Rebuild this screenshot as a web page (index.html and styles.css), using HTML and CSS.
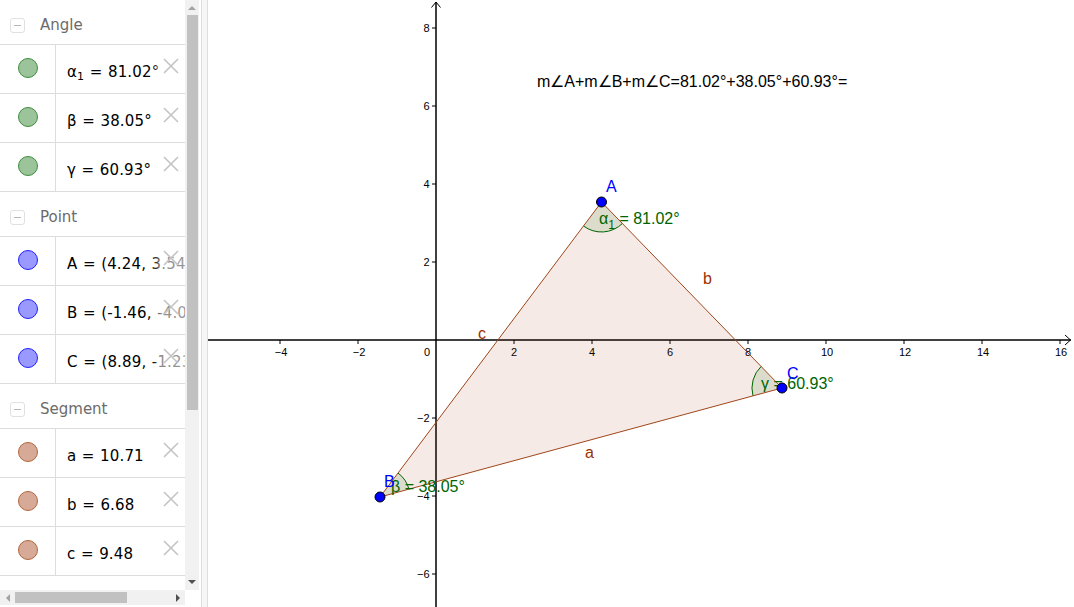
FILE: index.html
```html
<!DOCTYPE html>
<html>
<head>
<meta charset="utf-8">
<link rel="stylesheet" href="styles.css">
</head>
<body>
<div class="algebra">
  <div class="list">
    <div class="group-header"><span class="toggle"></span><span class="group-title">Angle</span></div>
    <div class="row"><div class="marker"><span class="dot dot-angle"></span></div><div class="value">α<sub>1</sub> = 81.02°</div><svg class="delete" viewBox="0 0 16 16"><path d="M1 1L15 15M15 1L1 15"/></svg></div>
    <div class="row"><div class="marker"><span class="dot dot-angle"></span></div><div class="value">β = 38.05°</div><svg class="delete" viewBox="0 0 16 16"><path d="M1 1L15 15M15 1L1 15"/></svg></div>
    <div class="row"><div class="marker"><span class="dot dot-angle"></span></div><div class="value">γ = 60.93°</div><svg class="delete" viewBox="0 0 16 16"><path d="M1 1L15 15M15 1L1 15"/></svg></div>

    <div class="group-header"><span class="toggle"></span><span class="group-title">Point</span></div>
    <div class="row"><div class="marker"><span class="dot dot-point"></span></div><div class="value">A = (4.24, 3.54)</div><svg class="delete" viewBox="0 0 16 16"><path d="M1 1L15 15M15 1L1 15"/></svg></div>
    <div class="row"><div class="marker"><span class="dot dot-point"></span></div><div class="value">B = (-1.46, -4.03)</div><svg class="delete" viewBox="0 0 16 16"><path d="M1 1L15 15M15 1L1 15"/></svg></div>
    <div class="row"><div class="marker"><span class="dot dot-point"></span></div><div class="value">C = (8.89, -1.23)</div><svg class="delete" viewBox="0 0 16 16"><path d="M1 1L15 15M15 1L1 15"/></svg></div>

    <div class="group-header"><span class="toggle"></span><span class="group-title">Segment</span></div>
    <div class="row"><div class="marker"><span class="dot dot-seg"></span></div><div class="value">a = 10.71</div><svg class="delete" viewBox="0 0 16 16"><path d="M1 1L15 15M15 1L1 15"/></svg></div>
    <div class="row"><div class="marker"><span class="dot dot-seg"></span></div><div class="value">b = 6.68</div><svg class="delete" viewBox="0 0 16 16"><path d="M1 1L15 15M15 1L1 15"/></svg></div>
    <div class="row"><div class="marker"><span class="dot dot-seg"></span></div><div class="value">c = 9.48</div><svg class="delete" viewBox="0 0 16 16"><path d="M1 1L15 15M15 1L1 15"/></svg></div>
  </div>
  <div class="vscroll">
    <div class="vbtn"><span class="arrow-up"></span></div>
    <div class="vthumb"></div>
    <div class="vspace"></div>
    <div class="vbtn vbtn-down"><span class="arrow-down"></span></div>
  </div>
  <div class="hscroll">
    <div class="hbtn"><span class="arrow-left"></span></div>
    <div class="hthumb"></div>
    <div class="hspace"></div>
    <div class="hbtn"><span class="arrow-right"></span></div>
  </div>
</div>
<div class="divider"></div>
<div class="graphics">
  <svg class="canvas" width="866" height="607" viewBox="208 0 866 607">
    <g class="axis">
      <line x1="208" y1="340" x2="1071" y2="340"/>
      <polyline class="arrowhead" points="1065,335 1070.5,340 1065,345" fill="none"/>
      <line x1="436" y1="2" x2="436" y2="607"/>
      <polyline class="arrowhead" points="431.5,7.5 436,2 440.5,7.5" fill="none"/>
      <g class="ticks">
        <line x1="280" y1="340" x2="280" y2="344"/>
        <line x1="358" y1="340" x2="358" y2="344"/>
        <line x1="514" y1="340" x2="514" y2="344"/>
        <line x1="592" y1="340" x2="592" y2="344"/>
        <line x1="670" y1="340" x2="670" y2="344"/>
        <line x1="748" y1="340" x2="748" y2="344"/>
        <line x1="826" y1="340" x2="826" y2="344"/>
        <line x1="904" y1="340" x2="904" y2="344"/>
        <line x1="982" y1="340" x2="982" y2="344"/>
        <line x1="1060" y1="340" x2="1060" y2="344"/>
        <line x1="432" y1="28" x2="436" y2="28"/>
        <line x1="432" y1="106" x2="436" y2="106"/>
        <line x1="432" y1="184" x2="436" y2="184"/>
        <line x1="432" y1="262" x2="436" y2="262"/>
        <line x1="432" y1="418" x2="436" y2="418"/>
        <line x1="432" y1="496" x2="436" y2="496"/>
        <line x1="432" y1="574" x2="436" y2="574"/>
      </g>
    </g>
    <g class="axis-label xl">
      <text x="281" y="356">−4</text>
      <text x="359" y="356">−2</text>
      <text x="427" y="356">0</text>
      <text x="514" y="356">2</text>
      <text x="592" y="356">4</text>
      <text x="670" y="356">6</text>
      <text x="748" y="356">8</text>
      <text x="827" y="356">10</text>
      <text x="905" y="356">12</text>
      <text x="983" y="356">14</text>
      <text x="1061" y="356">16</text>
    </g>
    <g class="axis-label yl">
      <text x="429.5" y="32">8</text>
      <text x="429.5" y="110">6</text>
      <text x="429.5" y="188">4</text>
      <text x="429.5" y="266">2</text>
      <text x="429.5" y="422">−2</text>
      <text x="429.5" y="500">−4</text>
      <text x="429.5" y="578">−6</text>
    </g>

    <polygon class="poly" points="601.5,202 380,497 782,388"/>

    <path class="sector" d="M601.5 202 L622.4 223.5 A30 30 0 0 1 583.5 226 Z"/>
    <path class="arc" d="M622.4 223.5 A30 30 0 0 1 583.5 226"/>
    <path class="sector" d="M380 497 L398 473 A30 30 0 0 1 409 489.2 Z"/>
    <path class="arc" d="M398 473 A30 30 0 0 1 409 489.2"/>
    <path class="sector" d="M782 388 L753 395.9 A30 30 0 0 1 761.1 366.5 Z"/>
    <path class="arc" d="M753 395.9 A30 30 0 0 1 761.1 366.5"/>

    <polygon class="edges" points="601.5,202 380,497 782,388"/>

    <text class="lbl seg" x="703" y="284">b</text>
    <text class="lbl seg" x="478" y="339">c</text>
    <text class="lbl seg" x="585" y="458">a</text>

    <text class="lbl ang" x="599" y="224">α<tspan dy="5" class="sub">1</tspan><tspan dy="-5"> = 81.02°</tspan></text>
    <text class="lbl ang" x="761" y="389">γ = 60.93°</text>
    <text class="lbl ang" x="391" y="492">β = 38.05°</text>

    <text class="lbl pt" x="606" y="192">A</text>
    <text class="lbl pt" x="787" y="379">C</text>
    <text class="lbl pt" x="384" y="487">B</text>

    <circle class="point" cx="601.5" cy="202" r="5"/>
    <circle class="point" cx="380" cy="497" r="5"/>
    <circle class="point" cx="782" cy="388" r="5"/>

    <text class="formula" x="537" y="87">m∠A+m∠B+m∠C=81.02°+38.05°+60.93°=</text>
  </svg>
</div>
</body>
</html>
```
FILE: styles.css
```css
html, body {
  margin: 0;
  padding: 0;
}
body {
  width: 1074px;
  height: 607px;
  overflow: hidden;
  display: flex;
  background: #ffffff;
  font-family: "DejaVu Sans", "Noto Sans", sans-serif;
}

/* ---------- algebra view ---------- */
.algebra {
  width: 201px;
  flex: none;
  display: grid;
  grid-template-columns: 185px 14px 2px;
  grid-template-rows: 590px 15px 2px;
}
.list {
  grid-column: 1;
  grid-row: 1;
  overflow: hidden;
}
.group-header {
  height: 45px;
  box-sizing: border-box;
  border-bottom: 1px solid #dcdcdc;
  display: flex;
  align-items: flex-start;
}
.toggle {
  width: 15px;
  height: 15px;
  box-sizing: border-box;
  margin: 18px 0 0 10px;
  border: 1px solid #e0e0e0;
  border-radius: 3px;
  position: relative;
}
.toggle::before {
  content: "";
  position: absolute;
  left: 3px;
  right: 3px;
  top: 6px;
  height: 1px;
  background: #b8b8b8;
}
.group-title {
  margin: 15px 0 0 15px;
  font-size: 15px;
  line-height: 20px;
  color: #6b6b6b;
}
.row {
  position: relative;
  height: 49px;
  box-sizing: border-box;
  border-bottom: 1px solid #dcdcdc;
  display: grid;
  grid-template-columns: 56px 1fr;
  overflow: hidden;
}
.row::after {
  content: "";
  position: absolute;
  top: 0;
  bottom: 0;
  right: 0;
  width: 32px;
  background: linear-gradient(to right, rgba(255,255,255,0) 0%, rgba(255,255,255,0.55) 25%, rgba(255,255,255,0.6) 100%);
}
.marker {
  border-right: 1px solid #dcdcdc;
}
.dot {
  display: block;
  width: 20px;
  height: 20px;
  box-sizing: border-box;
  border-radius: 50%;
  margin: 13px 0 0 18px;
}
.dot-angle {
  background: #9bc49b;
  border: 1px solid #3f8c3f;
}
.dot-point {
  background: #9999ff;
  border: 1px solid #2020ff;
}
.dot-seg {
  background: #d6aa96;
  border: 1px solid #b3653c;
}
.value {
  padding: 17px 0 0 11px;
  font-size: 15px;
  line-height: 20px;
  letter-spacing: 0.15px;
  word-spacing: 0.6px;
  color: #000;
  white-space: nowrap;
}
.value sub {
  font-size: 11px;
  vertical-align: -3px;
  line-height: 0;
}
.delete {
  position: absolute;
  right: 6px;
  top: 13px;
  width: 16px;
  height: 16px;
  z-index: 1;
}
.delete path {
  stroke: #c4c4c4;
  stroke-width: 1.6;
  fill: none;
}

/* scrollbars */
.vscroll {
  grid-column: 2;
  grid-row: 1;
  background: #f1f1f1;
  display: flex;
  flex-direction: column;
  align-items: center;
}
.vbtn {
  height: 15px;
  width: 100%;
  display: flex;
  align-items: center;
  justify-content: center;
}
.vbtn-down {
  height: 13px;
  align-items: flex-start;
  padding-top: 3px;
  box-sizing: border-box;
}
.vthumb {
  width: 11px;
  height: 395px;
  background: #c1c1c1;
}
.vspace {
  flex: 1;
}
.arrow-up {
  width: 0;
  height: 0;
  border-left: 4px solid transparent;
  border-right: 4px solid transparent;
  border-bottom: 4px solid #a3a3a3;
}
.arrow-down {
  width: 0;
  height: 0;
  border-left: 4px solid transparent;
  border-right: 4px solid transparent;
  border-top: 4px solid #505050;
}
.hscroll {
  grid-column: 1;
  grid-row: 2;
  background: #f1f1f1;
  display: flex;
  align-items: center;
}
.hbtn {
  width: 15px;
  height: 100%;
  display: flex;
  align-items: center;
  justify-content: center;
}
.hthumb {
  width: 112px;
  height: 11px;
  background: #c1c1c1;
}
.hspace {
  flex: 1;
}
.arrow-left {
  width: 0;
  height: 0;
  border-top: 4px solid transparent;
  border-bottom: 4px solid transparent;
  border-right: 4px solid #a3a3a3;
}
.arrow-right {
  width: 0;
  height: 0;
  border-top: 4px solid transparent;
  border-bottom: 4px solid transparent;
  border-left: 4px solid #505050;
}

/* divider */
.divider {
  width: 5px;
  flex: none;
  background: #f6f6f6;
  border-left: 1px solid #dedede;
  border-right: 1px solid #dedede;
}

/* ---------- graphics view ---------- */
.graphics {
  flex: 1;
  overflow: hidden;
}
.canvas {
  display: block;
  font-family: "Liberation Sans", Arial, sans-serif;
}
.axis line, .axis polyline {
  stroke: #000;
  stroke-width: 1.5;
}
.axis .arrowhead {
  stroke-width: 1;
}
.ticks line {
  stroke-width: 1;
}
.axis-label text {
  font-size: 11px;
  fill: #000;
}
.xl text {
  text-anchor: middle;
}
.yl text {
  text-anchor: end;
}
.poly {
  fill: rgba(153, 51, 0, 0.1);
  stroke: none;
}
.sector {
  fill: rgba(0, 100, 0, 0.1);
  stroke: none;
}
.arc {
  fill: none;
  stroke: #006400;
  stroke-width: 1;
}
.edges {
  fill: none;
  stroke: #a0461a;
  stroke-width: 1;
}
.lbl {
  font-size: 16px;
}
.lbl.seg {
  fill: #993300;
}
.lbl.ang {
  fill: #006400;
}
.lbl.pt {
  fill: #0000ff;
}
.sub {
  font-size: 12px;
}
.point {
  fill: #0000ff;
  stroke: #000;
  stroke-width: 1;
}
.formula {
  font-size: 16px;
  fill: #000;
}
```
